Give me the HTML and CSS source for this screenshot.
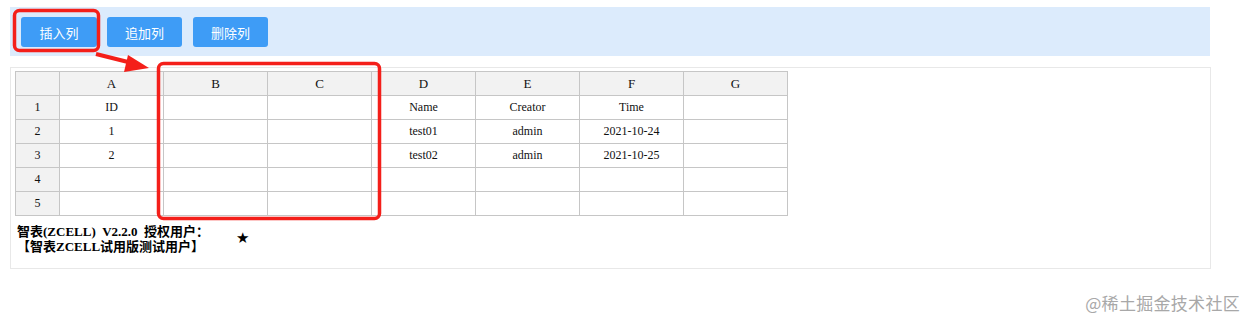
FILE: index.html
```html
<!DOCTYPE html>
<html lang="zh-CN">
<head>
  <meta charset="UTF-8" />
  <title>智表 ZCELL 插入列</title>
  <link rel="stylesheet" href="styles.css">
</head>
<body>
  <div class="page">
    <div class="toolbar">
      <button class="tool-btn">插入列</button>
      <button class="tool-btn">追加列</button>
      <button class="tool-btn">删除列</button>
    </div>

    <div class="sheet-box">
      <table class="sheet">
        <colgroup>
          <col class="col-idx">
          <col span="7" class="col-cell">
        </colgroup>
        <thead>
          <tr><th></th><th>A</th><th>B</th><th>C</th><th>D</th><th>E</th><th>F</th><th>G</th></tr>
        </thead>
        <tbody>
          <tr><th>1</th><td>ID</td><td></td><td></td><td>Name</td><td>Creator</td><td>Time</td><td></td></tr>
          <tr><th>2</th><td>1</td><td></td><td></td><td>test01</td><td>admin</td><td>2021-10-24</td><td></td></tr>
          <tr><th>3</th><td>2</td><td></td><td></td><td>test02</td><td>admin</td><td>2021-10-25</td><td></td></tr>
          <tr><th>4</th><td></td><td></td><td></td><td></td><td></td><td></td><td></td></tr>
          <tr><th>5</th><td></td><td></td><td></td><td></td><td></td><td></td><td></td></tr>
        </tbody>
      </table>

      <div class="license">
        <div class="license-text">智表(ZCELL)&nbsp; V2.2.0 &nbsp;授权用户：<br>【智表ZCELL试用版测试用户】</div>
        <span class="star">★</span>
      </div>
    </div>

    <!-- 标注：红框和箭头 -->
    <svg class="marks" width="1255" height="329" viewBox="0 0 1255 329">
      <rect x="14.5" y="10.5" width="84" height="40" rx="5" fill="none" stroke="#f41f1a" stroke-width="3.5"/>
      <rect x="158.5" y="63.5" width="221" height="155" rx="5" fill="none" stroke="#f41f1a" stroke-width="3.5"/>
      <path d="M96 54 L132 63" stroke="#f41f1a" stroke-width="4" fill="none"/>
      <polygon points="149,68 128,55 124,72" fill="#f41f1a"/>
    </svg>

    <div class="watermark">@稀土掘金技术社区</div>
  </div>
</body>
</html>
```

FILE: styles.css
```css
body {
  margin: 0;
  background: #ffffff;
  font-family: 'Liberation Serif', 'Noto Sans CJK SC', serif;
}

.page {
  position: relative;
  width: 1255px;
  height: 329px;
  padding: 7px 0 0 10px;
  box-sizing: border-box;
  overflow: hidden;
}

.toolbar {
  width: 1200px;
  height: 49px;
  background: #dcebfc;
  display: flex;
  align-items: flex-start;
  gap: 10px;
  padding: 10px 0 0 11px;
  box-sizing: border-box;
}

.tool-btn {
  width: 75px;
  height: 30px;
  border: none;
  border-radius: 3px;
  background: #3e9cf6;
  color: #ffffff;
  font-family: 'Noto Sans CJK SC', sans-serif;
  font-size: 13px;
  padding: 0;
}

.tool-btn:first-child {
  width: 76px;
}

.tool-btn:last-child {
  margin-left: 1px;
}

.sheet-box {
  margin-top: 11px;
  width: 1201px;
  height: 202px;
  border: 1px solid #e8e8e8;
  box-sizing: border-box;
  padding: 3px 4px 0 4px;
}

.sheet {
  border-collapse: collapse;
  table-layout: fixed;
  width: 773px;
  font-size: 12px;
  color: #111111;
}

.col-idx {
  width: 44px;
}

.col-cell {
  width: 104px;
}

.sheet th,
.sheet td {
  height: 23px;
  border: 1px solid #c6c6c6;
  text-align: center;
  padding: 0;
  font-weight: normal;
}

.sheet thead th,
.sheet tbody th {
  background: #f2f2f2;
}

.sheet thead th {
  font-size: 13px;
}

.license {
  display: flex;
  align-items: flex-start;
  margin-top: 8px;
  padding-left: 2px;
  font-size: 13px;
  font-weight: bold;
  line-height: 15px;
  color: #000000;
}

.license-text {
  width: 219px;
}

.star {
  margin-top: 7px;
  font-family: 'DejaVu Sans', sans-serif;
  font-size: 15px;
}

.marks {
  position: absolute;
  left: 0;
  top: 0;
  pointer-events: none;
}

.watermark {
  position: absolute;
  right: 15px;
  top: 290px;
  font-family: 'Noto Sans CJK SC', sans-serif;
  font-size: 17px;
  color: #a8a8a8;
  letter-spacing: 0.3px;
}
```
